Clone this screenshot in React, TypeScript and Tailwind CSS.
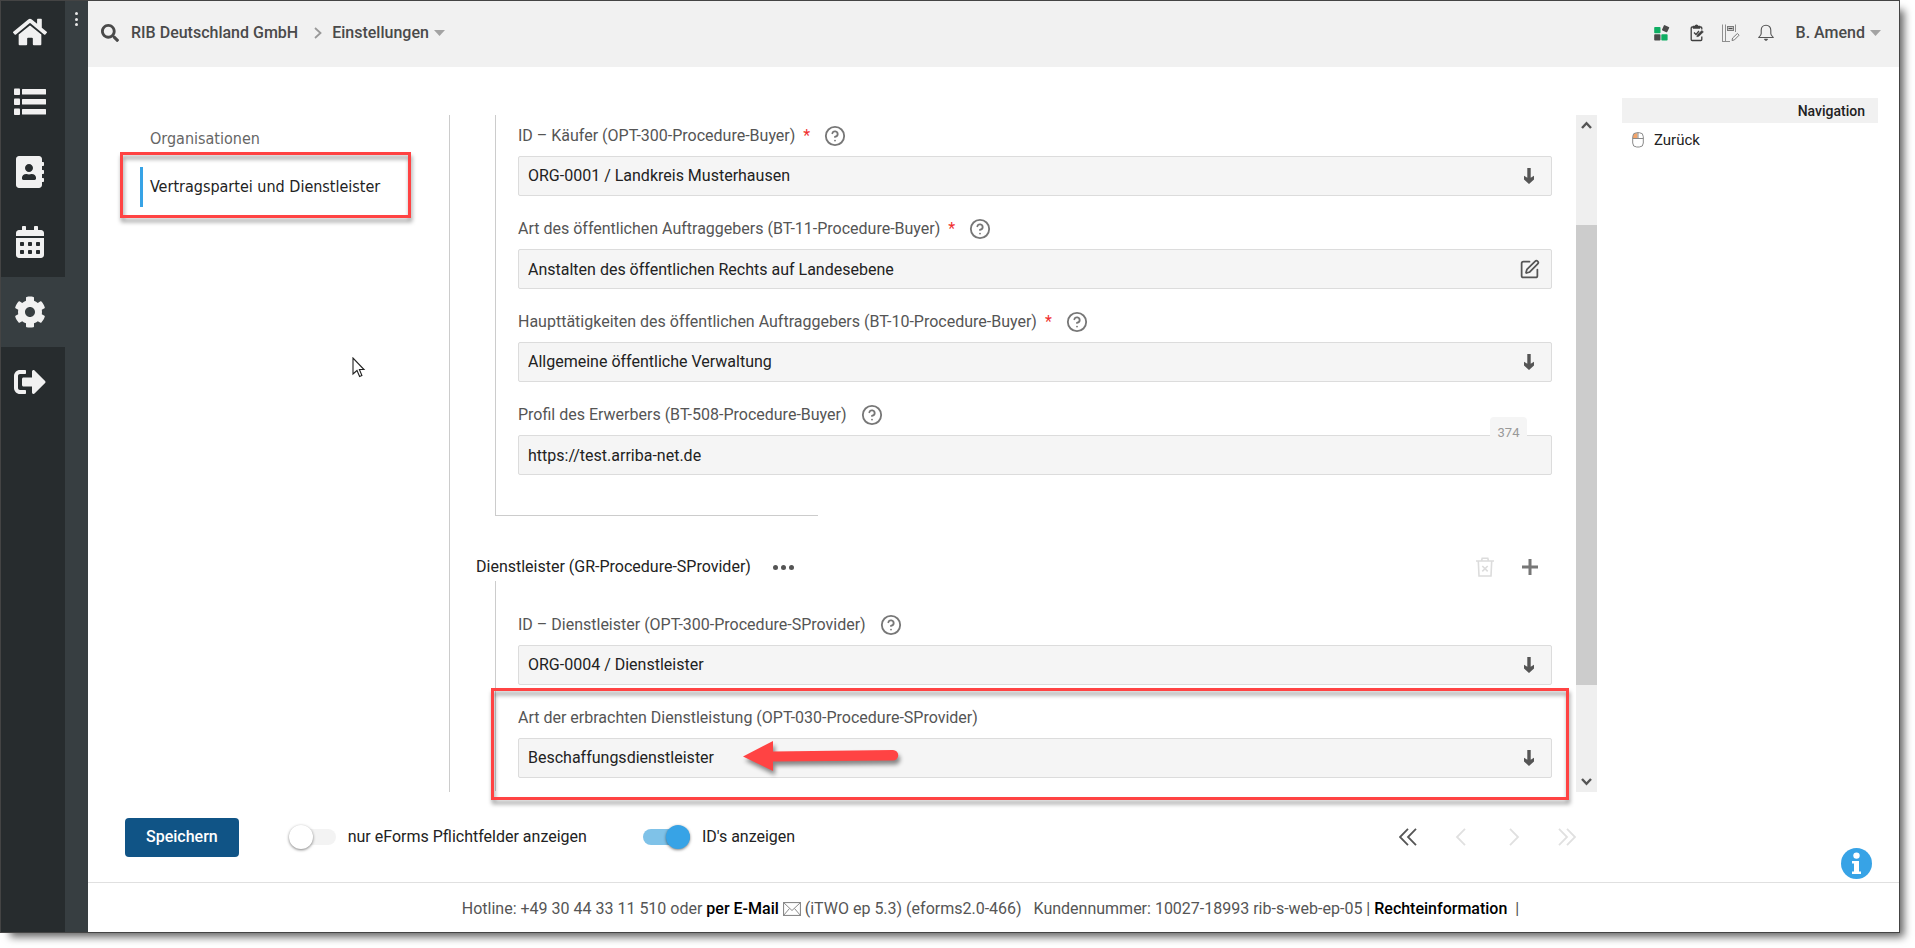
import { useState } from "react";
import type { ReactNode } from "react";
import {
  FaAddressBook,
  FaCalendarAlt,
  FaCog,
  FaHome,
  FaSearch,
  FaSignOutAlt,
} from "react-icons/fa";
import { CircleHelp, SquarePen } from "lucide-react";

function ListIcon() {
  return (
    <svg width="32" height="28" viewBox="0 0 32 28" fill="currentColor" aria-hidden="true">
      <rect x="0" y="0.500" width="6" height="6.500" rx="0.800" />
      <rect x="0" y="10.500" width="6" height="6.500" rx="0.800" />
      <rect x="0" y="20.500" width="6" height="6.500" rx="0.800" />
      <rect x="8" y="1" width="24" height="5.500" rx="0.500" />
      <rect x="8" y="11" width="24" height="5.500" rx="0.500" />
      <rect x="8" y="21" width="24" height="5.500" rx="0.500" />
    </svg>
  );
}

const mainLinks = [
  { label: "Startseite", icon: <FaHome size={34} /> },
  { label: "Listen", icon: <ListIcon /> },
  { label: "Adressbuch", icon: <FaAddressBook size={32} /> },
  { label: "Kalender", icon: <FaCalendarAlt size={32} /> },
  { label: "Einstellungen", icon: <FaCog size={32} />, active: true },
  { label: "Abmelden", icon: <FaSignOutAlt size={32} /> },
];

const pagerButtons = [
  { label: "Erste Seite", path: "M9 .8L1 9l8 8.200M17 .8L9 9l8 8.200", enabled: true },
  { label: "Vorherige Seite", path: "M13 .8L5 9l8 8.200", enabled: false },
  { label: "Nächste Seite", path: "M5 .8L13 9l-8 8.200", enabled: false },
  { label: "Letzte Seite", path: "M1 .8L9 9l-8 8.200M9 .8L17 9l-8 8.200", enabled: false },
];

function Caret() {
  return (
    <svg width="11" height="6" viewBox="0 0 11 6" aria-hidden="true">
      <path d="M0 0h11L5.500 6z" fill="#a3a3a3" />
    </svg>
  );
}

function AppsIcon() {
  return (
    <svg width="16" height="16" viewBox="0 0 16 16" aria-hidden="true">
      <rect x="0.200" y="2" width="6.300" height="6.300" rx="0.800" fill="#0fae63" />
      <rect x="0.200" y="9.300" width="6.300" height="6.300" rx="0.800" fill="#4a4a4a" />
      <rect x="7.300" y="9.300" width="6.300" height="6.300" rx="0.800" fill="#0fae63" />
      <rect x="8.700" y="0.800" width="5.800" height="5.800" rx="0.800" fill="#4a4a4a" transform="rotate(25 11.6 3.7)" />
    </svg>
  );
}

function ClipboardIcon() {
  return (
    <svg width="16" height="18" viewBox="0 0 16 18" fill="none" stroke="#3f3f3f" strokeWidth="1.300" aria-hidden="true">
      <path d="M4 3H2.200A1 1 0 0 0 1.200 4v11.500a1 1 0 0 0 1 1h8.600a1 1 0 0 0 1-1V12.500M9 3h1.800a1 1 0 0 1 1 1v1.500" />
      <path d="M3.500 4V2.500h1.700C5.500 .8 7.500.8 7.800 2.500H9.500V4z" fill="#3f3f3f" />
      <path d="M4 8.500l2 2 3-3.500" />
      <path d="M6.800 12.800l.6-2 4.500-4.300 1.500 1.400-4.500 4.300z" fill="#3f3f3f" strokeWidth="0.600" />
    </svg>
  );
}

function NotebookIcon() {
  return (
    <svg width="18" height="18" viewBox="0 0 18 18" fill="none" stroke="#7b7b7b" strokeWidth="1" aria-hidden="true">
      <path d="M.5 .5v17M3.500 .5v17M0 17.500h8M13.500 .5V8" stroke="#8f8f8f" />
      <rect x="5.500" y="2.500" width="6" height="4" fill="#c9c9c9" />
      <path d="M6.500 4.500h4" stroke="#4a4a4a" />
      <path d="M10 16.500l.6-2.500 4.800-4.500 1.700 1.700-4.700 4.700z" fill="#f1f1f1" />
    </svg>
  );
}

function BellIcon() {
  return (
    <svg width="16" height="18" viewBox="0 0 16 18" fill="none" stroke="#555" strokeWidth="1.100" strokeLinejoin="round" aria-hidden="true">
      <path d="M8 1.200c-3 0-4.800 2.200-4.800 5v3.300c0 1.500-1.300 2.500-2.500 4h14.600c-1.200-1.500-2.500-2.500-2.500-4V6.200c0-2.800-1.800-5-4.800-5z" />
      <path d="M6.300 15c.2 1 .9 1.500 1.700 1.500S9.500 16 9.700 15z" fill="#555" strokeWidth="0.500" />
    </svg>
  );
}

function MouseIcon() {
  return (
    <svg width="12" height="16" viewBox="0 0 12 16" fill="none" stroke="#8a8a8a" aria-hidden="true">
      <path d="M1 6V4.200C1 2 2.800 1 5.500 1v5z" fill="#f3a469" stroke="none" />
      <rect x="0.700" y="0.700" width="10.600" height="14.300" rx="4" />
      <path d="M.7 6.500h10.600M6 .7v5.800" />
    </svg>
  );
}

function MailIcon() {
  return (
    <svg width="18" height="14" viewBox="0 0 18 14" fill="none" stroke="#8a8a8a" className="inline-block align-[-2px]" aria-hidden="true">
      <rect x="0.500" y="0.500" width="17" height="13" strokeWidth="1.200" />
      <path d="M.5.500L9 8.500 17.500.5M.5 13.500l6-7M17.500 13.500l-6-7" />
    </svg>
  );
}

function DownArrow() {
  return (
    <svg width="10" height="16" viewBox="0 0 10 16" aria-hidden="true">
      <path d="M3.300 0h3.400v9.800L10 7.800v3.600L5 16 0 11.400V7.800l3.300 2z" fill="#555" />
    </svg>
  );
}

function TrashIcon() {
  return (
    <svg width="18" height="20" viewBox="0 0 18 20" fill="none" stroke="#dcdcdc" strokeWidth="1.600" aria-hidden="true">
      <path d="M0 4h18M5.500 4l.7-2.800h5.600l.7 2.800M2.300 4l.7 15h12l.7-15" />
      <path d="M6.300 9l5.400 5.400M11.700 9l-5.400 5.400" />
    </svg>
  );
}

function InfoIcon() {
  return (
    <svg width="31" height="31" viewBox="0 0 31 31" aria-hidden="true">
      <circle cx="15.500" cy="15.500" r="15.500" fill="#37a3e6" />
      <circle cx="15.500" cy="7.600" r="3.200" fill="#fff" />
      <path d="M11 13h7v10.500h2V26h-9v-2.500h2V15.500h-2z" fill="#fff" />
    </svg>
  );
}

function Field({
  id,
  label,
  required,
  help = true,
  children,
}: {
  id: string;
  label: string;
  required?: boolean;
  help?: boolean;
  children: ReactNode;
}) {
  return (
    <div>
      <div className="mb-2 flex h-6 items-center text-[#555]">
        <label htmlFor={id}>
          {label}
          {required && <span className="ml-2 text-[#f03030]">*</span>}
        </label>
        {help && (
          <button type="button" aria-label={"Hilfe zu " + label} className="ml-3.5 text-[#777]">
            <CircleHelp size={22} strokeWidth={2} />
          </button>
        )}
      </div>
      {children}
    </div>
  );
}

const boxClass =
  "h-10 w-full appearance-none rounded-xs border border-[#dcdcdc] bg-[#f5f5f5] px-[9px] text-[#222] outline-none";

function SelectBox({ id, value }: { id: string; value: string }) {
  return (
    <div className="relative">
      <select id={id} className={boxClass} defaultValue={value}>
        <option>{value}</option>
      </select>
      <span className="pointer-events-none absolute inset-y-0 right-[18px] flex items-center">
        <DownArrow />
      </span>
    </div>
  );
}

function Toggle({ label, initial }: { label: string; initial: boolean }) {
  const [on, setOn] = useState(initial);
  return (
    <label className="flex items-center gap-3 text-[#222]">
      <span className="relative flex h-6 w-[47px] items-center">
        <input
          type="checkbox"
          checked={on}
          onChange={(e) => setOn(e.target.checked)}
          className="peer h-4 w-full appearance-none rounded-full bg-[#f3f3f3] checked:bg-[#7fc2e8]"
        />
        <span className="pointer-events-none absolute left-0 size-6 rounded-full bg-white shadow-[0_1px_3px_rgba(0,0,0,0.5)] peer-checked:right-0 peer-checked:left-auto peer-checked:bg-[#37a3e6]" />
      </span>
      {label}
    </label>
  );
}

const highlight =
  "pointer-events-none absolute border-3 border-[#ff4343] drop-shadow-[1px_4px_2px_rgba(0,0,0,0.4)]";

export default function App() {
  return (
    <div className="h-screen min-h-[700px] bg-white pr-[15px] pb-[15px] font-[Roboto,sans-serif] text-base leading-6">
      <div className="flex h-full border border-[#444] bg-white shadow-[7px_7px_8px_-3px_rgba(0,0,0,0.6)]">
        <nav aria-label="Hauptmenü" className="flex w-16 shrink-0 flex-col bg-[#272c2e] text-[#f1f1f1]">
          {mainLinks.map((item, i) => (
            <a
              key={item.label}
              href="#"
              aria-label={item.label}
              className={
                "flex items-center justify-center pr-1.5 " +
                (i === 0 ? "h-[66px] pb-1 " : "h-[70px] ") +
                (item.active ? "bg-[#373e41]" : "")
              }
            >
              {item.icon}
            </a>
          ))}
        </nav>
        <div className="flex w-[23px] shrink-0 justify-center bg-[#373e41] pt-[11px]">
          <button type="button" aria-label="Menü öffnen" className="flex h-3.5 flex-col justify-between">
            <span className="size-[3px] rounded-full bg-[#e8e8e8]" />
            <span className="size-[3px] rounded-full bg-[#e8e8e8]" />
            <span className="size-[3px] rounded-full bg-[#e8e8e8]" />
          </button>
        </div>

        <div className="flex min-w-0 flex-1 flex-col">
          <header className="flex h-[66px] shrink-0 items-center bg-[#f1f1f1] pr-[18px] pb-0.5 pl-[13px] font-medium text-[#4a4a4a]">
            <button type="button" aria-label="Suchen">
              <FaSearch size={18} />
            </button>
            <a href="#" className="ml-3">RIB Deutschland GmbH</a>
            <svg width="8" height="12" viewBox="0 0 8 12" className="mr-2.5 ml-4" fill="none" stroke="#999" strokeWidth="1.800" aria-hidden="true">
              <path d="M1 1l5.500 5L1 11" />
            </svg>
            <button type="button" className="flex items-center gap-[5px]">
              Einstellungen <Caret />
            </button>
            <div className="ml-auto flex items-center">
              <button type="button" aria-label="Anwendungen"><AppsIcon /></button>
              <button type="button" aria-label="Aufgaben" className="ml-5"><ClipboardIcon /></button>
              <button type="button" aria-label="Notizen" className="ml-4"><NotebookIcon /></button>
              <button type="button" aria-label="Benachrichtigungen" className="ml-[18px]"><BellIcon /></button>
              <button type="button" className="ml-[22px] flex items-center gap-[5px]">
                B. Amend <Caret />
              </button>
            </div>
          </header>

          <div className="flex min-h-0 flex-1">
            <main className="flex min-w-0 flex-1 flex-col">
              <div className="flex min-h-0 flex-1 pt-12">
                <div className="relative w-[362px] shrink-0 border-r border-[#ccc] pt-1 pl-[52px] font-['DejaVu_Sans_Condensed','Noto_Sans',sans-serif] text-base">
                  <a href="#" className="flex h-10 items-center border-l-3 border-transparent pl-[7px] text-[#666]">
                    Organisationen
                  </a>
                  <a href="#" className="mt-2 flex h-10 items-center border-l-3 border-[#37a3e6] pl-[7px] text-[#222]">
                    Vertragspartei und Dienstleister
                  </a>
                  <div className={highlight + " top-[37px] right-[38px] left-8 h-[66px]"} />
                  <svg width="14" height="22" viewBox="0 0 14 22" className="absolute top-[242px] left-[264px]" aria-hidden="true">
                    <path d="M1 1v16l4-3.500 2.600 6 2.300-1-2.500-6H12z" fill="#fff" stroke="#222" strokeWidth="1.100" />
                  </svg>
                </div>

                <form className="min-w-0 flex-1 pr-6">
                  <section className="ml-[45px] border-l border-[#ccc] pt-[9px] pl-[22px]">
                    <div className="flex flex-col gap-[21px] pb-10">
                      <Field id="buyer" label="ID – Käufer (OPT-300-Procedure-Buyer)" required>
                        <SelectBox id="buyer" value="ORG-0001 / Landkreis Musterhausen" />
                      </Field>
                      <Field id="kind" label="Art des öffentlichen Auftraggebers (BT-11-Procedure-Buyer)" required>
                        <div className="relative">
                          <input id="kind" className={boxClass} defaultValue="Anstalten des öffentlichen Rechts auf Landesebene" />
                          <button type="button" aria-label="Bearbeiten" className="absolute inset-y-0 right-3 flex items-center text-[#555]">
                            <SquarePen size={21} strokeWidth={2} />
                          </button>
                        </div>
                      </Field>
                      <Field id="activity" label="Haupttätigkeiten des öffentlichen Auftraggebers (BT-10-Procedure-Buyer)" required>
                        <SelectBox id="activity" value="Allgemeine öffentliche Verwaltung" />
                      </Field>
                      <Field id="profile" label="Profil des Erwerbers (BT-508-Procedure-Buyer)">
                        <div className="relative">
                          <input id="profile" className={boxClass} defaultValue="https://test.arriba-net.de" />
                          <span className="absolute -top-[18px] right-[25px] flex h-6 w-[37px] items-end justify-center rounded-t-sm bg-[#f5f5f5] text-[13px] leading-4 text-[#999]">
                            374
                          </span>
                        </div>
                      </Field>
                    </div>
                    <div className="-ml-[22px] h-px w-[322px] bg-[#ccc]" />
                  </section>

                  <section>
                    <div className="mt-[37px] flex h-7 items-center pl-[26px] text-[#222]">
                      <h2>Dienstleister (GR-Procedure-SProvider)</h2>
                      <button type="button" aria-label="Weitere Aktionen" className="ml-[22px] flex gap-[3px]">
                        <span className="size-[5px] rounded-full bg-[#555]" />
                        <span className="size-[5px] rounded-full bg-[#555]" />
                        <span className="size-[5px] rounded-full bg-[#555]" />
                      </button>
                      <button type="button" aria-label="Löschen" className="ml-auto">
                        <TrashIcon />
                      </button>
                      <button type="button" aria-label="Hinzufügen" className="mr-3.5 ml-7">
                        <svg width="16" height="16" viewBox="0 0 16 16" aria-hidden="true">
                          <path d="M8 0v16M0 8h16" stroke="#777" strokeWidth="3" />
                        </svg>
                      </button>
                    </div>
                    <div className="ml-[45px] flex flex-col gap-[21px] border-l border-[#ccc] pt-8 pb-[13px] pl-[22px]">
                      <Field id="provider" label="ID – Dienstleister (OPT-300-Procedure-SProvider)">
                        <SelectBox id="provider" value="ORG-0004 / Dienstleister" />
                      </Field>
                      <div className="relative">
                        <Field id="service" label="Art der erbrachten Dienstleistung (OPT-030-Procedure-SProvider)" help={false}>
                          <SelectBox id="service" value="Beschaffungsdienstleister" />
                        </Field>
                        <div className={highlight + " -top-[18px] -right-[17px] -bottom-[22px] -left-[27px]"} />
                        <svg width="164" height="40" viewBox="0 0 164 40" className="pointer-events-none absolute top-[34px] left-[223px] overflow-visible drop-shadow-[2px_4px_2px_rgba(0,0,0,0.45)]" aria-hidden="true">
                          <path d="M2 16.500L32 1v10.500L152 10a5 5 0 0 1 0 10.500L32 21.500V31z" fill="#ff4343" />
                        </svg>
                      </div>
                    </div>
                  </section>
                </form>

                <div className="flex w-[21px] shrink-0 flex-col items-center bg-[#efefef]">
                  <button type="button" aria-label="Nach oben" className="flex h-[110px] pt-1.5">
                    <svg width="11" height="8" viewBox="0 0 11 8" fill="none" stroke="#555" strokeWidth="2.400" aria-hidden="true">
                      <path d="M1 7l4.500-4.800L10 7" />
                    </svg>
                  </button>
                  <div className="h-[460px] w-full bg-[#ccc]" />
                  <button type="button" aria-label="Nach unten" className="mt-auto flex pb-1.5">
                    <svg width="11" height="8" viewBox="0 0 11 8" fill="none" stroke="#555" strokeWidth="2.400" aria-hidden="true">
                      <path d="M1 1l4.500 4.800L10 1" />
                    </svg>
                  </button>
                </div>
              </div>

              <div className="flex h-[90px] shrink-0 items-center pr-[21px] pl-[37px]">
                <button type="button" className="mr-[50px] h-[39px] rounded-sm bg-[#105486] px-[21px] font-medium text-white">
                  Speichern
                </button>
                <Toggle label="nur eForms Pflichtfelder anzeigen" initial={false} />
                <span className="w-14" />
                <Toggle label="ID's anzeigen" initial={true} />
                <div className="ml-auto flex items-center gap-[35px]">
                  {pagerButtons.map((b) => (
                    <button
                      key={b.label}
                      type="button"
                      aria-label={b.label}
                      disabled={!b.enabled}
                      className="text-[#555] disabled:text-[#e0e0e0]"
                    >
                      <svg width="18" height="18" viewBox="0 0 18 18" fill="none" stroke="currentColor" strokeWidth="1.800" aria-hidden="true">
                        <path d={b.path} />
                      </svg>
                    </button>
                  ))}
                </div>
              </div>
            </main>

            <aside className="flex w-[302px] shrink-0 flex-col pt-[31px] pr-[21px] pb-[3px] pl-[25px]">
              <h2 className="h-[25px] bg-[#f1f1f1] pr-[13px] text-right text-sm leading-[26px] font-medium text-[#222]">
                Navigation
              </h2>
              <a href="#" className="mt-[5px] flex items-center gap-2.5 pl-2.5 text-[15px] text-[#222]">
                <MouseIcon /> Zurück
              </a>
              <button type="button" aria-label="Information" className="mt-auto mr-1.5 self-end">
                <InfoIcon />
              </button>
            </aside>
          </div>

          <footer className="flex h-[50px] shrink-0 items-center justify-center border-t border-[#e0e0e0] pt-0.5 pr-1.5 text-[#555]">
            <p>
              Hotline: +49 30 44 33 11 510 oder{" "}
              <a href="#" className="font-medium text-black">per E-Mail</a> <MailIcon /> (iTWO ep 5.3)
              (eforms2.0-466) &nbsp; Kundennummer: 10027-18993 rib-s-web-ep-05 |{" "}
              <a href="#" className="font-medium text-black">Rechteinformation</a> &nbsp;|
            </p>
          </footer>
        </div>
      </div>
    </div>
  );
}
